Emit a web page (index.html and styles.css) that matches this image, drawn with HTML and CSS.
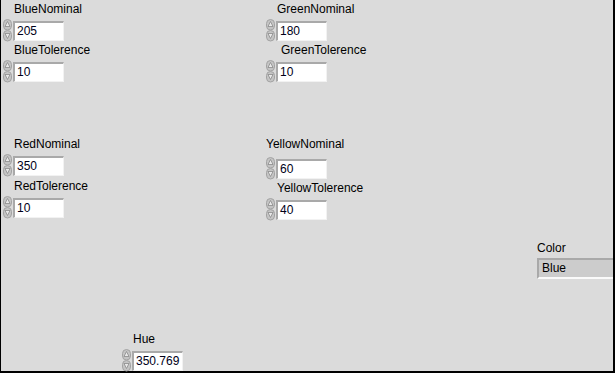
FILE: index.html
```html
<!DOCTYPE html>
<html>
<head>
    <title>Hue Panel</title>
    <link rel="stylesheet" href="styles.css">
</head>
<body>
    <div class="panel">
        <div class="ctl blue-nom">
            <div class="label">BlueNominal</div>
            <div class="row">
                <svg class="spin" width="9" height="23" viewBox="0 0 9 23"><rect x="0.5" y="0.5" width="8" height="10.5" rx="4" fill="#c4c4c4" stroke="#a3a3a3"/><rect x="0.5" y="11.5" width="8" height="10.5" rx="4" fill="#c4c4c4" stroke="#a3a3a3"/><path d="M4.5 2.5 L7 7.5 L2 7.5 Z" fill="#e8e8e8" stroke="#8a8a8a" stroke-width="0.8"/><path d="M4.5 19.5 L7 14.5 L2 14.5 Z" fill="#e8e8e8" stroke="#8a8a8a" stroke-width="0.8"/></svg>
                <div class="num">205</div>
            </div>
        </div>
        <div class="ctl blue-tol">
            <div class="label">BlueTolerence</div>
            <div class="row">
                <svg class="spin" width="9" height="23" viewBox="0 0 9 23"><rect x="0.5" y="0.5" width="8" height="10.5" rx="4" fill="#c4c4c4" stroke="#a3a3a3"/><rect x="0.5" y="11.5" width="8" height="10.5" rx="4" fill="#c4c4c4" stroke="#a3a3a3"/><path d="M4.5 2.5 L7 7.5 L2 7.5 Z" fill="#e8e8e8" stroke="#8a8a8a" stroke-width="0.8"/><path d="M4.5 19.5 L7 14.5 L2 14.5 Z" fill="#e8e8e8" stroke="#8a8a8a" stroke-width="0.8"/></svg>
                <div class="num">10</div>
            </div>
        </div>
        <div class="ctl green-nom">
            <div class="label">GreenNominal</div>
            <div class="row">
                <svg class="spin" width="9" height="23" viewBox="0 0 9 23"><rect x="0.5" y="0.5" width="8" height="10.5" rx="4" fill="#c4c4c4" stroke="#a3a3a3"/><rect x="0.5" y="11.5" width="8" height="10.5" rx="4" fill="#c4c4c4" stroke="#a3a3a3"/><path d="M4.5 2.5 L7 7.5 L2 7.5 Z" fill="#e8e8e8" stroke="#8a8a8a" stroke-width="0.8"/><path d="M4.5 19.5 L7 14.5 L2 14.5 Z" fill="#e8e8e8" stroke="#8a8a8a" stroke-width="0.8"/></svg>
                <div class="num">180</div>
            </div>
        </div>
        <div class="ctl green-tol">
            <div class="label shift">GreenTolerence</div>
            <div class="row">
                <svg class="spin" width="9" height="23" viewBox="0 0 9 23"><rect x="0.5" y="0.5" width="8" height="10.5" rx="4" fill="#c4c4c4" stroke="#a3a3a3"/><rect x="0.5" y="11.5" width="8" height="10.5" rx="4" fill="#c4c4c4" stroke="#a3a3a3"/><path d="M4.5 2.5 L7 7.5 L2 7.5 Z" fill="#e8e8e8" stroke="#8a8a8a" stroke-width="0.8"/><path d="M4.5 19.5 L7 14.5 L2 14.5 Z" fill="#e8e8e8" stroke="#8a8a8a" stroke-width="0.8"/></svg>
                <div class="num">10</div>
            </div>
        </div>
        <div class="ctl red-nom">
            <div class="label">RedNominal</div>
            <div class="row">
                <svg class="spin" width="9" height="23" viewBox="0 0 9 23"><rect x="0.5" y="0.5" width="8" height="10.5" rx="4" fill="#c4c4c4" stroke="#a3a3a3"/><rect x="0.5" y="11.5" width="8" height="10.5" rx="4" fill="#c4c4c4" stroke="#a3a3a3"/><path d="M4.5 2.5 L7 7.5 L2 7.5 Z" fill="#e8e8e8" stroke="#8a8a8a" stroke-width="0.8"/><path d="M4.5 19.5 L7 14.5 L2 14.5 Z" fill="#e8e8e8" stroke="#8a8a8a" stroke-width="0.8"/></svg>
                <div class="num">350</div>
            </div>
        </div>
        <div class="ctl red-tol">
            <div class="label">RedTolerence</div>
            <div class="row">
                <svg class="spin" width="9" height="23" viewBox="0 0 9 23"><rect x="0.5" y="0.5" width="8" height="10.5" rx="4" fill="#c4c4c4" stroke="#a3a3a3"/><rect x="0.5" y="11.5" width="8" height="10.5" rx="4" fill="#c4c4c4" stroke="#a3a3a3"/><path d="M4.5 2.5 L7 7.5 L2 7.5 Z" fill="#e8e8e8" stroke="#8a8a8a" stroke-width="0.8"/><path d="M4.5 19.5 L7 14.5 L2 14.5 Z" fill="#e8e8e8" stroke="#8a8a8a" stroke-width="0.8"/></svg>
                <div class="num">10</div>
            </div>
        </div>
        <div class="ctl yellow-nom">
            <div class="label flush">YellowNominal</div>
            <div class="row">
                <svg class="spin" width="9" height="23" viewBox="0 0 9 23"><rect x="0.5" y="0.5" width="8" height="10.5" rx="4" fill="#c4c4c4" stroke="#a3a3a3"/><rect x="0.5" y="11.5" width="8" height="10.5" rx="4" fill="#c4c4c4" stroke="#a3a3a3"/><path d="M4.5 2.5 L7 7.5 L2 7.5 Z" fill="#e8e8e8" stroke="#8a8a8a" stroke-width="0.8"/><path d="M4.5 19.5 L7 14.5 L2 14.5 Z" fill="#e8e8e8" stroke="#8a8a8a" stroke-width="0.8"/></svg>
                <div class="num">60</div>
            </div>
        </div>
        <div class="ctl yellow-tol">
            <div class="label">YellowTolerence</div>
            <div class="row">
                <svg class="spin" width="9" height="23" viewBox="0 0 9 23"><rect x="0.5" y="0.5" width="8" height="10.5" rx="4" fill="#c4c4c4" stroke="#a3a3a3"/><rect x="0.5" y="11.5" width="8" height="10.5" rx="4" fill="#c4c4c4" stroke="#a3a3a3"/><path d="M4.5 2.5 L7 7.5 L2 7.5 Z" fill="#e8e8e8" stroke="#8a8a8a" stroke-width="0.8"/><path d="M4.5 19.5 L7 14.5 L2 14.5 Z" fill="#e8e8e8" stroke="#8a8a8a" stroke-width="0.8"/></svg>
                <div class="num">40</div>
            </div>
        </div>
        <div class="ctl color-ind">
            <div class="label">Color</div>
            <div class="str">Blue</div>
        </div>
        <div class="ctl hue">
            <div class="label">Hue</div>
            <div class="row">
                <svg class="spin" width="9" height="23" viewBox="0 0 9 23"><rect x="0.5" y="0.5" width="8" height="10.5" rx="4" fill="#c4c4c4" stroke="#a3a3a3"/><rect x="0.5" y="11.5" width="8" height="10.5" rx="4" fill="#c4c4c4" stroke="#a3a3a3"/><path d="M4.5 2.5 L7 7.5 L2 7.5 Z" fill="#e8e8e8" stroke="#8a8a8a" stroke-width="0.8"/><path d="M4.5 19.5 L7 14.5 L2 14.5 Z" fill="#e8e8e8" stroke="#8a8a8a" stroke-width="0.8"/></svg>
                <div class="num">350.769</div>
            </div>
        </div>
    </div>
</body>
</html>
```

FILE: styles.css
```css
body {
  margin: 0;
  font-family: 'Liberation Sans', Arial, sans-serif;
  font-size: 12px;
  color: #000;
}

.panel {
  position: relative;
  width: 612px;
  height: 371px;
  background: #dbdbdb;
  border-left: 1px solid #000;
  border-right: 2px solid #000;
  border-bottom: 2px solid #000;
}

/* front panel controls sit at their own spots */
.ctl {
  position: absolute;
}

.label {
  height: 14px;
  line-height: 14px;
  margin-left: 11px;
  margin-bottom: 3px;
  white-space: nowrap;
}

.label.shift {
  margin-left: 15px;
}

.label.flush {
  margin-left: 0;
  margin-bottom: 6px;
}

.row {
  display: flex;
  align-items: center;
}

.spin {
  display: block;
  margin-right: 1px;
}

.num {
  box-sizing: border-box;
  width: 51px;
  height: 20px;
  line-height: 17px;
  padding-left: 2px;
  background: #fff;
  border-top: 2px solid #a9a9a9;
  border-left: 2px solid #a9a9a9;
  border-right: 1px solid #f2f2f2;
  border-bottom: 1px solid #f2f2f2;
  color: #000018;
}

.str {
  box-sizing: border-box;
  width: 76px;
  height: 21px;
  line-height: 17px;
  padding-left: 3px;
  background: #cccccc;
  border-top: 2px solid #a9a9a9;
  border-left: 2px solid #a9a9a9;
  border-bottom: 2px solid #fafafa;
}

.color-ind .label {
  margin-left: 0;
}

.blue-nom { left: 2px; top: 2px; }
.blue-tol { left: 2px; top: 43px; }
.green-nom { left: 265px; top: 2px; }
.green-tol { left: 265px; top: 43px; }
.red-nom { left: 2px; top: 137px; }
.red-tol { left: 2px; top: 179px; }
.yellow-nom { left: 265px; top: 137px; }
.yellow-tol { left: 265px; top: 181px; }
.color-ind { left: 536px; top: 241px; }
.hue { left: 121px; top: 332px; }
```
